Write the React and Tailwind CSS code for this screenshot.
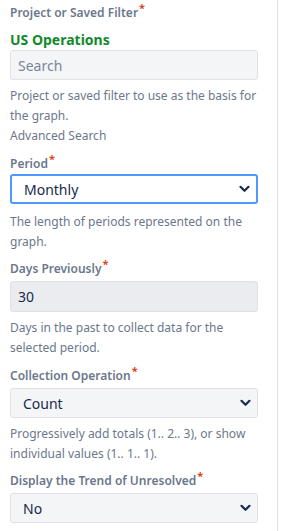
import React from "react";

const font = { fontFamily: '"Noto Sans", "Open Sans", Arial, sans-serif' };

function Label({ children, className = "" }) {
  return (
    <div className={"h-[20px] text-[12px] leading-[20px] font-semibold text-[#6b778c] " + className}>
      {children}
      <span className="relative -top-[5px] ml-px text-[11px] leading-none text-[#de350b]">*</span>
    </div>
  );
}

function Help({ children, className = "mt-[6px]" }) {
  return <div className={"text-[12px] leading-[20px] text-[#6b778c] " + className}>{children}</div>;
}

function Chevron() {
  return (
    <svg width="11" height="8" viewBox="0 0 11 8" className="shrink-0">
      <path d="M1.5 1.8 L5.5 5.8 L9.5 1.8" fill="none" stroke="#172b4d" strokeWidth="2.2" strokeLinecap="round" strokeLinejoin="round" />
    </svg>
  );
}

function Select({ value, focused, className = "mt-[2px]" }) {
  return (
    <div
      className={
        "h-[30px] flex items-center justify-between rounded-[3px] pl-[12px] pr-[6px] text-[14px] text-[#172b4d] " +
        (focused ? "border-2 border-[#4c9aff] bg-white " : "border border-[#dfe1e6] bg-[#f4f5f7] ") +
        className
      }
    >
      <span>{value}</span>
      <Chevron />
    </div>
  );
}

export default function App() {
  return (
    <div className="flex bg-white min-h-[531px]" style={font}>
      <div className="w-[278px] border-r border-[#dfe1e6] pl-[10px] pr-[19px] pt-[3px]">
        <Label>Project or Saved Filter</Label>
        <div className="mt-[7px] text-[14px] leading-[20px] font-bold text-[#14892c]">US Operations</div>
        <div className="h-[30px] flex items-center rounded-[3px] border border-[#dfe1e6] bg-[#f4f5f7] px-[7px] text-[14px] text-[#7a869a]">
          Search
        </div>
        <Help>
          Project or saved filter to use as the basis for the graph.
          <div>Advanced Search</div>
        </Help>

        <Label className="mt-[8px]">Period</Label>
        <Select value="Monthly" focused className="mt-0" />
        <Help className="mt-[8px]">The length of periods represented on the graph.</Help>

        <Label className="mt-[7px]">Days Previously</Label>
        <div className="mt-[2px] h-[31px] flex items-center rounded-[3px] border border-[#dfe1e6] bg-[#ebecf0] px-[7px] text-[14px] text-[#172b4d]">
          30
        </div>
        <Help>Days in the past to collect data for the selected period.</Help>

        <Label className="mt-[8px]">Collection Operation</Label>
        <Select value="Count" />
        <Help>Progressively add totals (1.. 2.. 3), or show individual values (1.. 1.. 1).</Help>

        <Label className="mt-[7px]">Display the Trend of Unresolved</Label>
        <Select value="No" />
      </div>
    </div>
  );
}
